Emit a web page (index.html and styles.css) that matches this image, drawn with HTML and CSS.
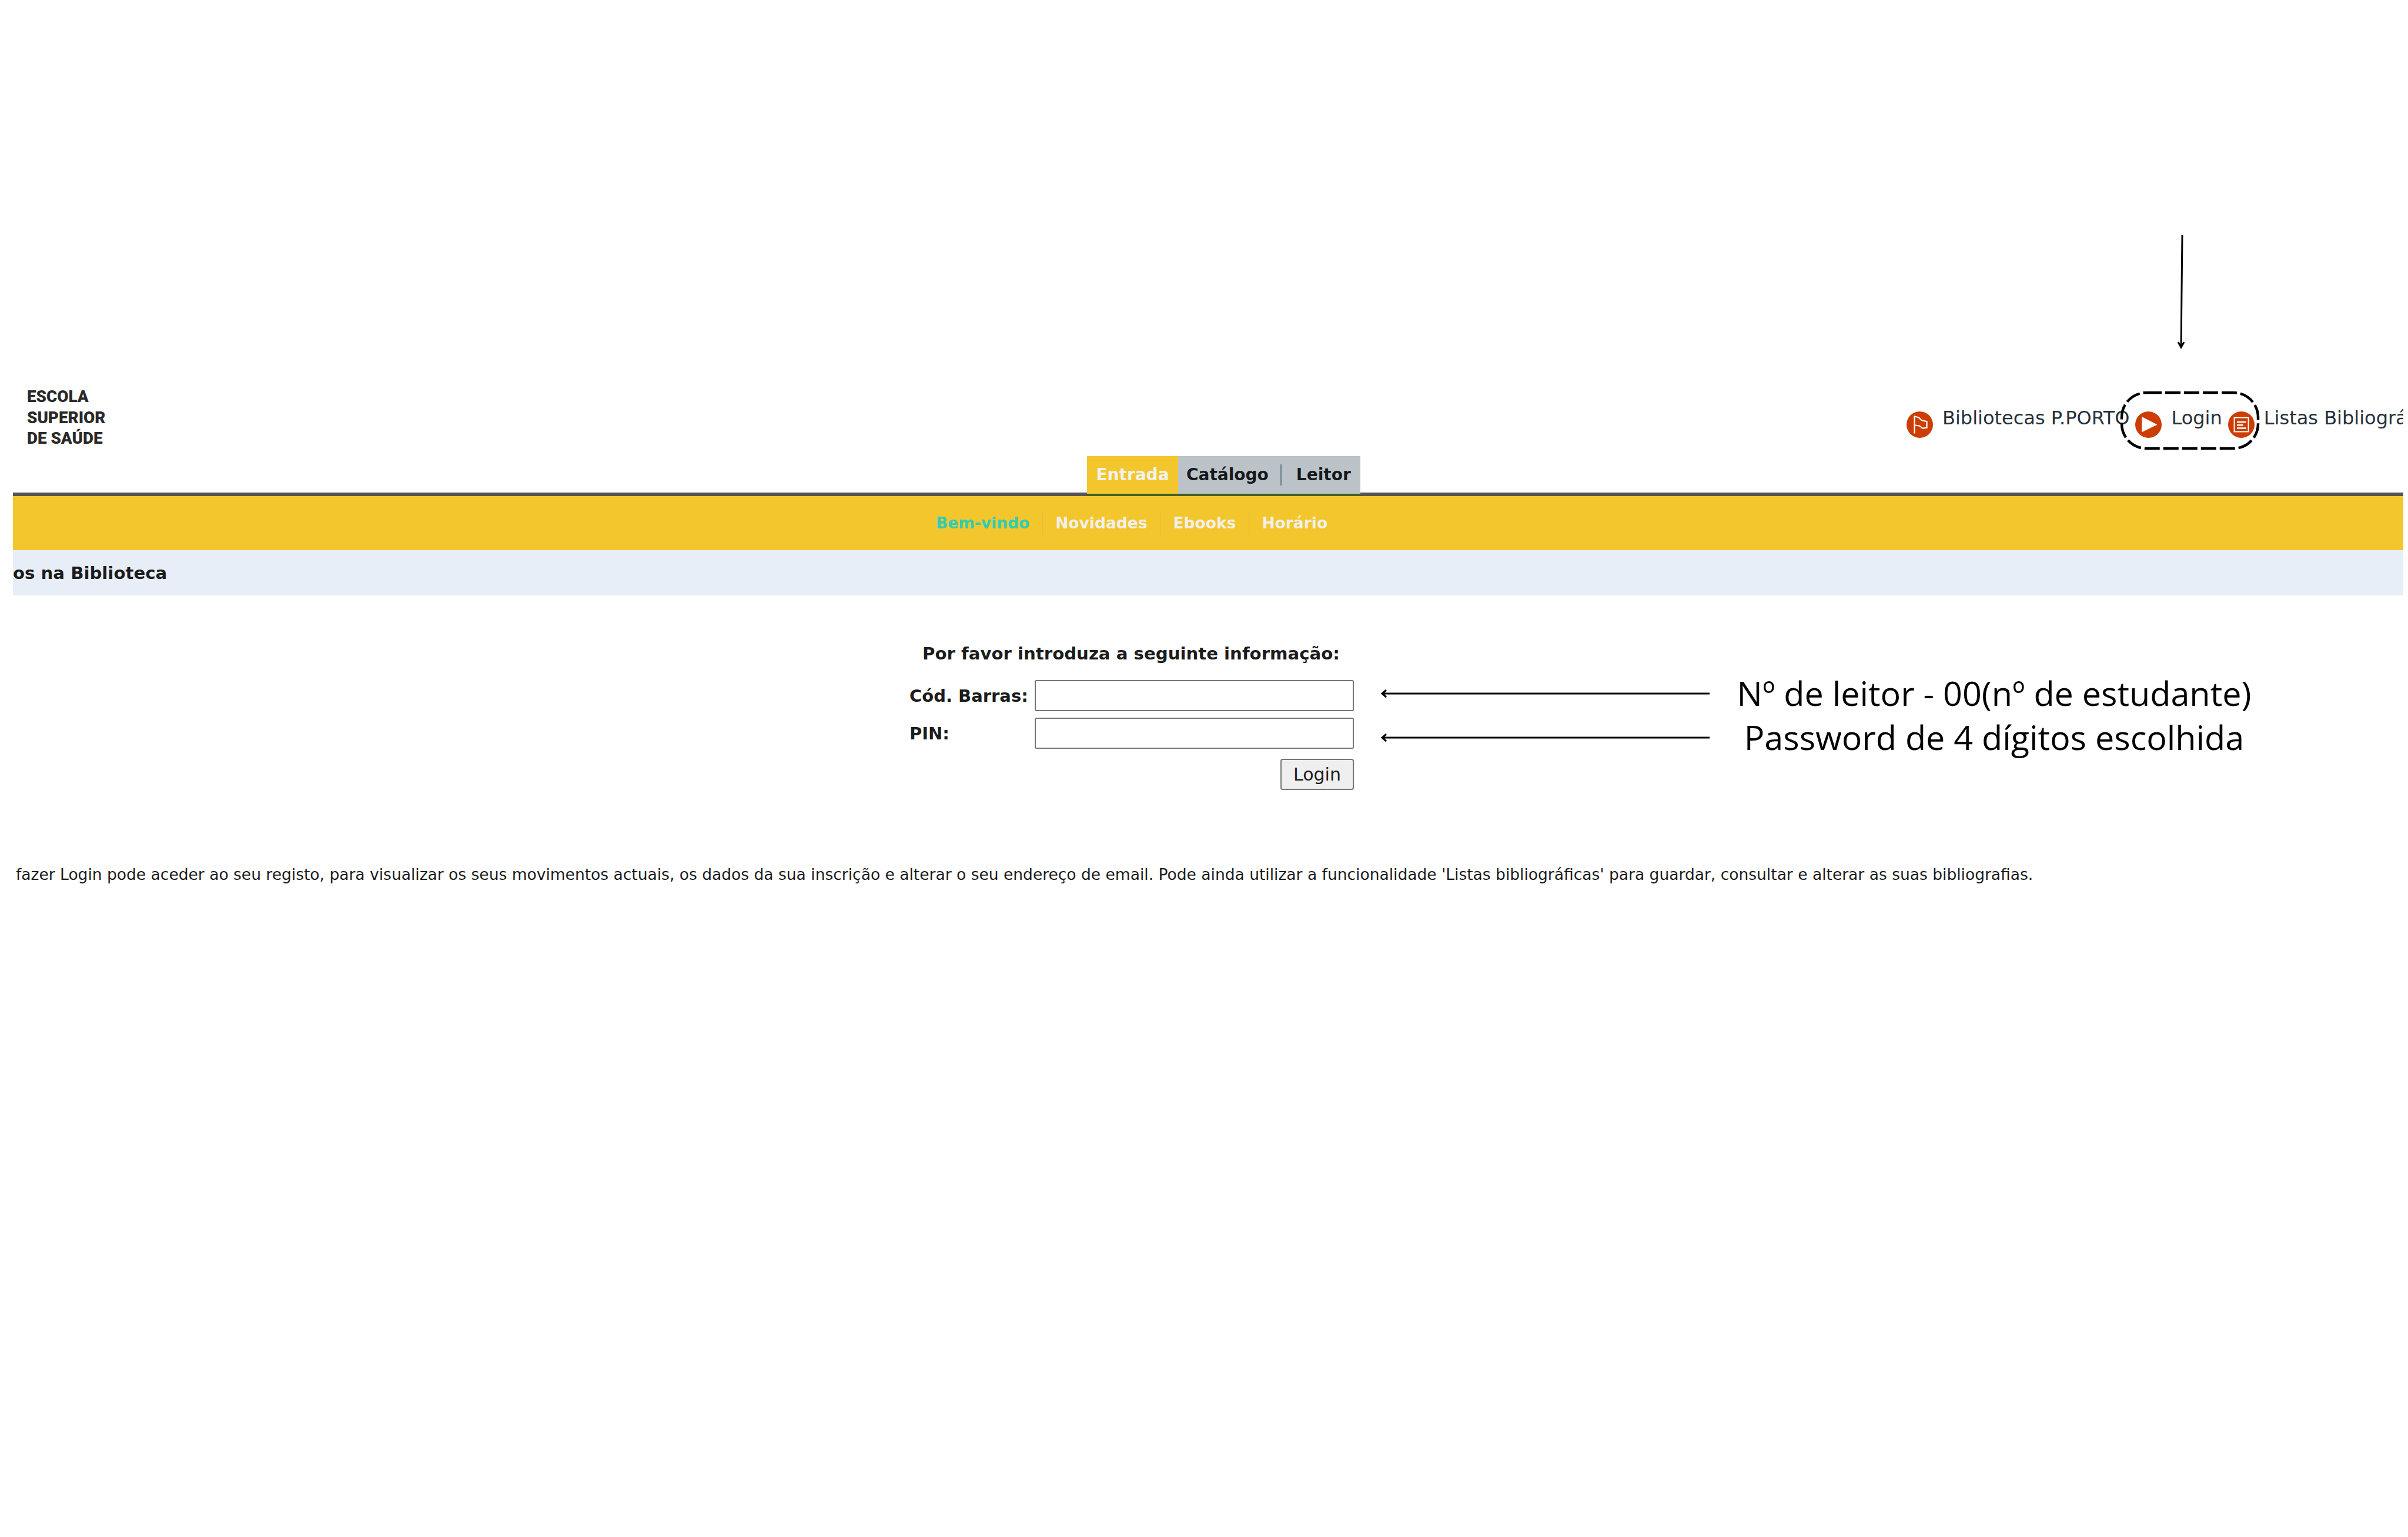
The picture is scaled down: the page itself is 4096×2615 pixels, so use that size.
FILE: index.html
```html
<!DOCTYPE html>
<html lang="pt">
<head>
<meta charset="utf-8">
<title>Login</title>
<link rel="stylesheet" href="styles.css">
</head>
<body>
<div class="page">
  <header class="header">
    <div class="logo">ESCOLA<br>SUPERIOR<br>DE SAÚDE</div>
    <nav class="links">
      <a class="link">
        <svg class="icon" viewBox="0 0 60 60"><circle cx="30" cy="30" r="30" fill="#cb3d02"/><path d="M18 10V50M18 11L28 14L34 20L46 23V37L36 38L30 33L18 31" fill="none" stroke="#fff" stroke-width="3"/></svg>
        <span>Bibliotecas P.PORTO</span>
      </a>
      <a class="link">
        <svg class="icon" viewBox="0 0 60 60"><circle cx="30" cy="30" r="30" fill="#cb3d02"/><polygon points="15,12 50,30 15,47" fill="#fff"/></svg>
        <span>Login</span>
      </a>
      <a class="link">
        <svg class="icon" viewBox="0 0 60 60"><circle cx="30" cy="30" r="30" fill="#cb3d02"/><rect x="14" y="14" width="32" height="32" fill="none" stroke="#fff" stroke-width="2.5"/><path d="M20 24H41M20 31H34M20 38H41" stroke="#fff" stroke-width="3.5"/></svg>
        <span>Listas Bibliográficas</span>
      </a>
    </nav>
  </header>

  <div class="tabs">
    <a class="tab tab-active">Entrada</a>
    <div class="tab-group">
      <a class="tab">Catálogo</a>
      <i class="tab-sep"></i>
      <a class="tab">Leitor</a>
    </div>
  </div>

  <nav class="subnav">
    <a class="sub sub-active">Bem-vindo</a>
    <a class="sub">Novidades</a>
    <a class="sub">Ebooks</a>
    <a class="sub">Horário</a>
  </nav>

  <div class="title-row">os na Biblioteca</div>

  <form class="form">
    <p class="form-title">Por favor introduza a seguinte informação:</p>
    <div class="form-grid">
      <label class="form-label">Cód. Barras:</label>
      <input class="form-input" type="text">
      <label class="form-label">PIN:</label>
      <input class="form-input" type="password">
      <button class="form-button" type="button">Login</button>
    </div>
  </form>

  <p class="note">fazer Login pode aceder ao seu registo, para visualizar os seus movimentos actuais, os dados da sua inscrição e alterar o seu endereço de email. Pode ainda utilizar a funcionalidade 'Listas bibliográficas' para guardar, consultar e alterar as suas bibliografias.</p>

  <svg class="overlay" viewBox="0 0 4096 2615">
    <rect x="3609" y="668" width="232" height="95" rx="42" ry="42" fill="none" stroke="#000" stroke-width="4.5" stroke-dasharray="26 6"/>
    <path d="M3712 400L3710 590M3705 582L3710 591L3715 582" fill="none" stroke="#000" stroke-width="3"/>
    <path d="M2352 1180H2908M2358 1174L2351 1180L2358 1186" fill="none" stroke="#000" stroke-width="3"/>
    <path d="M2352 1255H2908M2358 1249L2351 1255L2358 1261" fill="none" stroke="#000" stroke-width="3"/>
  </svg>
  <div class="annotation annotation-one">Nº de leitor - 00(nº de estudante)</div>
  <div class="annotation annotation-two">Password de 4 dígitos escolhida</div>
</div>
</body>
</html>
```
FILE: styles.css
```css
html, body {
  margin: 0;
  padding: 0;
  background: #fff;
}

.page {
  position: relative;
  box-sizing: border-box;
  width: 4096px;
  height: 2615px;
  padding: 0 8px 0 22px;
  overflow: hidden;
  font-family: "DejaVu Sans", sans-serif;
  color: #1c1c1c;
}

.header {
  display: flex;
  padding-top: 657px;
  height: 107px;
}

.logo {
  flex: 1;
  padding-left: 24px;
  font-family: Roboto, sans-serif;
  font-weight: 900;
  font-size: 27.8px;
  line-height: 35.7px;
  color: #2a2a2a;
}

.links {
  display: flex;
  gap: 10px;
  width: 845px;
  padding-top: 43px;
  overflow: hidden;
  white-space: nowrap;
  font-size: 32px;
  line-height: 40px;
  color: #26303a;
}

.link {
  display: flex;
  flex: none;
  gap: 16px;
  align-items: flex-start;
}

.link span {
  margin-top: -9px;
}

.icon {
  display: block;
  flex: none;
  width: 45px;
  height: 45px;
}

.tabs {
  position: relative;
  z-index: 1;
  display: flex;
  margin: 12px 0 -5px 1827px;
  font-weight: 700;
  font-size: 28px;
  line-height: 64px;
  height: 67px;
  width: 465px;
}

.tab-active {
  box-sizing: border-box;
  width: 155px;
  text-align: center;
  color: #f2f2ef;
  background: #f3c62d;
  border-bottom: 3px solid #3d6410;
}

.tab-group {
  box-sizing: border-box;
  display: flex;
  align-items: center;
  flex: 1;
  height: 67px;
  padding-left: 14px;
  color: #15191c;
  background: #bcc3c8;
  border-bottom: 3px solid #3d6410;
}

.tab-sep {
  width: 2px;
  height: 36px;
  margin: 0 25px 0 20px;
  background: #5f7f8c;
}

.subnav {
  display: flex;
  align-items: center;
  height: 92px;
  padding-left: 1570px;
  background: #f3c62d;
  border-top: 6px solid #555;
  font-weight: 700;
  font-size: 26.5px;
}

.sub {
  padding-right: 22px;
  margin-right: 21px;
  line-height: 40px;
  color: #f1f0ea;
  border-right: 1px solid #e5bd3a;
}

.sub:last-child {
  border-right: 0;
}

.sub-active {
  color: #2fcdb5;
}

.title-row {
  height: 77px;
  line-height: 78px;
  background: #e7eef8;
  font-weight: 700;
  font-size: 29.2px;
  color: #1c1c1c;
}

.form {
  margin: 79px 0 0 1525px;
  width: 760px;
}

.form-title {
  margin: 0 0 25px 22px;
  font-weight: 700;
  font-size: 29.2px;
  line-height: 40px;
  white-space: nowrap;
}

.form-grid {
  display: grid;
  grid-template-columns: 213px 543px;
  grid-auto-rows: 53px;
  row-gap: 11px;
  align-items: center;
}

.form-label {
  font-weight: 700;
  font-size: 29px;
  line-height: 40px;
  white-space: nowrap;
}

.form-input {
  box-sizing: border-box;
  width: 543px;
  height: 53px;
  margin: 0;
  background: #fff;
  border: 2px solid #767676;
  border-radius: 3px;
}

.form-button {
  grid-column: 2;
  justify-self: end;
  align-self: start;
  box-sizing: border-box;
  width: 125px;
  height: 53px;
  margin: 6px 0 0;
  padding: 0;
  background: #efefef;
  border: 2px solid #767676;
  border-radius: 4px;
  font-family: "DejaVu Sans", sans-serif;
  font-size: 30px;
  color: #1c1c1c;
}

.note {
  margin: 130px 0 0 5px;
  font-size: 26.5px;
  line-height: 40px;
  white-space: nowrap;
  color: #1c1c1c;
}

.overlay {
  position: absolute;
  top: 0;
  left: 0;
  width: 4096px;
  height: 2615px;
  pointer-events: none;
}

.annotation {
  position: absolute;
  left: 2892px;
  width: 1000px;
  text-align: center;
  font-family: "Open Sans", sans-serif;
  font-size: 57.5px;
  line-height: 76px;
  color: #000;
  white-space: nowrap;
}

.annotation-one {
  top: 1141px;
}

.annotation-two {
  top: 1216px;
}
```
